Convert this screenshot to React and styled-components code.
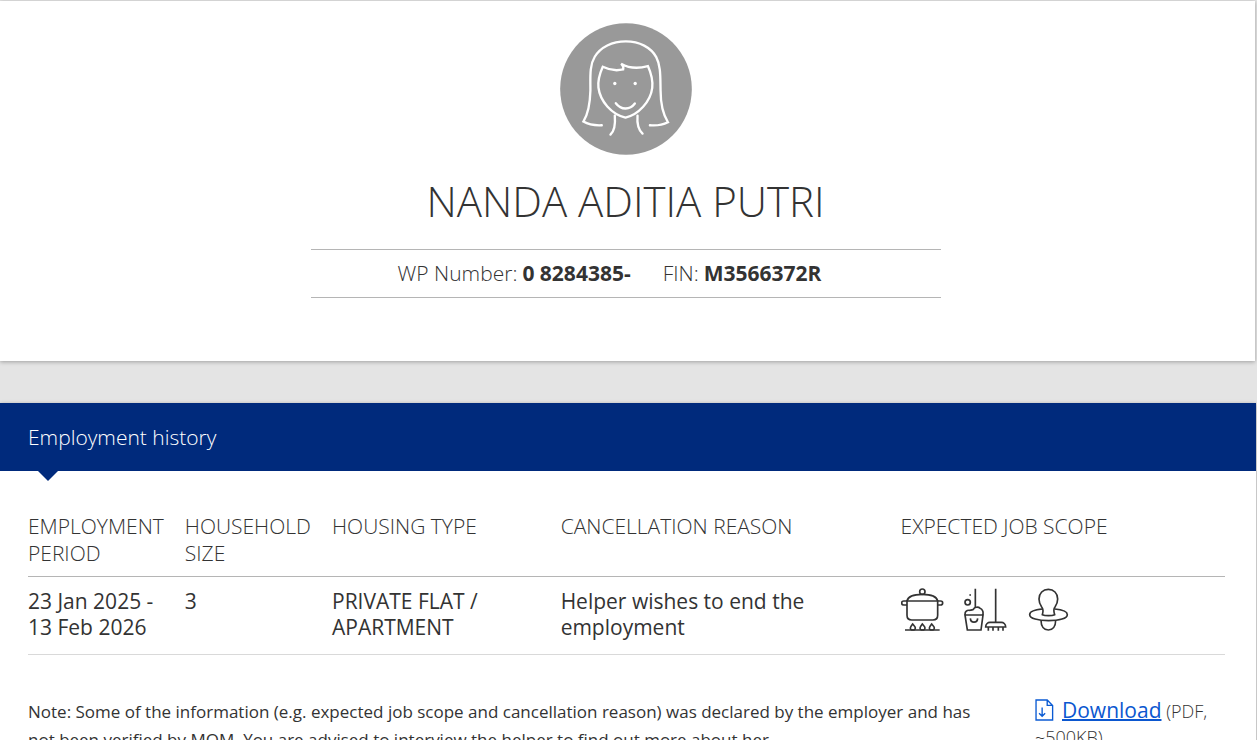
import React from "react";
import styled, { createGlobalStyle } from "styled-components";

const GlobalStyle = createGlobalStyle`
  *, *::before, *::after { box-sizing: border-box; }
  body {
    margin: 0;
    background: #e4e4e4;
    color: #333333;
    font-family: "Open Sans", "Noto Sans", sans-serif;
    font-size: 21px;
    line-height: 26px;
  }
`;

const Page = styled.main`
  display: flex;
  flex-direction: column;
  gap: 42px;
  padding: 1px 1px 0 0;
`;

const Panel = styled.section`
  background: #ffffff;
  box-shadow: 0 1px 4px rgba(0, 0, 0, 0.3);
`;

const Profile = styled(Panel)`
  display: flex;
  flex-direction: column;
  align-items: center;
  margin-right: 1px;
  padding: 22px 32px 63px 28px;
`;

const Avatar = styled.svg`
  width: 132px;
  height: 132px;
`;

const Name = styled.h1`
  margin: 17px 0 19px;
  font-size: 42px;
  font-weight: 300;
  line-height: 58px;
`;

const Identity = styled.dl`
  display: flex;
  justify-content: center;
  width: 100%;
  max-width: 630px;
  margin: 0;
  padding: 10px 0 11px;
  border: solid #b5b5b5;
  border-width: 1px 0;
`;

const IdentityItem = styled.div`
  display: flex;
  gap: 5px;
  padding-right: 32px;
`;

const Term = styled.dt`
  font-weight: 300;
`;

const Detail = styled.dd`
  margin: 0;
  font-weight: 700;
`;

const PanelTitle = styled.h2`
  position: relative;
  margin: 0;
  padding: 21px 28px;
  background: #002a7c;
  color: #ffffff;
  font-size: 21px;
  font-weight: 300;
  line-height: 26px;

  &::after {
    content: "";
    position: absolute;
    top: 100%;
    left: 38px;
    border: solid transparent;
    border-width: 10px 10px 0;
    border-top-color: #002a7c;
  }
`;

const PanelBody = styled.div`
  padding: 42px 31px 28px 28px;
`;

const HistoryTable = styled.table`
  width: 100%;
  border-collapse: separate;
  border-spacing: 0;
  table-layout: fixed;
`;

const Column = styled.col`
  width: ${({ $share }) => $share};
`;

const HeadCell = styled.th`
  padding: 0 16px 9px 0;
  border-bottom: 1px solid #b5b5b5;
  font-weight: 300;
  line-height: 27px;
  text-align: left;
  text-transform: uppercase;
  vertical-align: top;
  white-space: ${({ $nowrap }) => ($nowrap ? "nowrap" : "normal")};
`;

const Cell = styled.td`
  padding: 11px 20px 14px 0;
  border-bottom: 1px solid #d9d9d9;
  vertical-align: top;
`;

const ScopeList = styled.div`
  display: flex;
  gap: 20px;
`;

const ScopeIcon = styled.svg`
  display: block;
  width: 43px;
  height: 44px;
  fill: none;
  stroke: #333333;
  stroke-width: 5;
`;

const Footer = styled.footer`
  display: flex;
  justify-content: space-between;
  margin-top: 42px;
`;

const Note = styled.p`
  flex: 0 1 950px;
  margin: 0;
  padding-top: 1px;
  font-size: 17px;
  line-height: 28px;
`;

const Download = styled.p`
  flex: 0 0 190px;
  margin: 0;
  font-size: 18px;
  font-weight: 300;
`;

const DownloadIcon = styled.svg`
  width: 19px;
  height: 22px;
  margin-right: 8px;
  vertical-align: -3px;
  fill: none;
  stroke: #0b5bd3;
  stroke-width: 4;
`;

const DownloadLink = styled.a`
  color: #0b57d0;
  font-size: 21px;
  font-weight: 400;
  text-decoration-thickness: 2px;
`;

const PotIcon = () => (
  <ScopeIcon viewBox="32 37 129 132" role="img" aria-label="Cooking">
    <circle cx="96" cy="48" r="8" />
    <path d="M50 76C53 62 74 56 96 56s43 6 46 20" />
    <path d="M50 76h92v43q0 14-14 14H64q-14 0-14-14z" />
    <path d="M50 76H40q-6 0-6 6t6 6h10M142 76h9q6 0 6 6t-6 6h-9M44 163h104" />
    <path d="M67 145c-4 5-7 8-7 12q0 5 4 6h7q4-1 4-6c0-4-4-7-8-12zM96 145c-4 5-7 8-7 12q0 5 4 6h7q4-1 4-6c0-4-4-7-8-12zM124 145c-4 5-7 8-7 12q0 5 4 6h7q4-1 4-6c0-4-4-7-8-12z" />
  </ScopeIcon>
);

const CleaningIcon = () => (
  <ScopeIcon viewBox="221 37 129 132" role="img" aria-label="Cleaning">
    <circle cx="232" cy="80" r="8" />
    <path d="M237 58h5M255 39v56M316 39v100" />
    <path d="M224 118h54l-6 45h-41z" />
    <path d="M225 118c-3-8 4-16 14-14 5-2 8-1 10-3 3-8 16-8 20-3 8 3 11 12 8 20" />
    <path d="M240 128c1 15 21 15 22 0" />
    <path d="M286 154c0-9 7-14 13-14h34c6 0 13 5 13 14zM294 154v11M308 154v11M324 154v11M338 154v11" />
  </ScopeIcon>
);

const PacifierIcon = () => (
  <ScopeIcon viewBox="410 37 129 132" role="img" aria-label="Infant care">
    <path d="M456 117c3-9 3-17-2-23-5-7-8-14-8-24 0-17 12-29 28-29s28 12 28 29c0 10-3 17-8 24-5 6-4 14-1 23-8 4-29 4-37 0z" />
    <path d="M457 100c-23 2-39 8-39 17 0 11 25 18 57 18s56-7 56-18c0-9-15-15-38-17" />
    <path d="M452 134c0 18 9 29 22 29s22-11 22-29" />
  </ScopeIcon>
);

const HelperAvatar = () => (
  <Avatar viewBox="44 40 395 395" role="img" aria-label="Helper">
    <circle cx="241.500" cy="237.500" r="197" fill="#999999" />
    <g fill="none" stroke="#ffffff" strokeWidth="7" strokeLinecap="round" strokeLinejoin="miter">
      <path d="M169 346c-20 1-38-1-55-11 16-25 20-55 21-93 0-42-3-75 13-101 17-29 52-46 93-46s75 18 91 47c14 26 12 61 13 101 0 36 5 67 22 94-16 8-33 11-54 9" />
      <path d="M172 171c20 10 40 13 61 8 2-7-1-12-6-17 24 14 51 15 80 7 10 22 15 45 13 65-5 41-41 80-80 89-42-10-76-49-81-90-2-20 4-42 13-62z" />
      <path d="M208 317c2 24 1 44-13 57M276 317c-2 24 1 41 15 54M211 280c16 21 42 21 57 1" />
    </g>
    <g fill="#ffffff">
      <circle cx="208" cy="221" r="5" />
      <circle cx="269" cy="221" r="5" />
    </g>
  </Avatar>
);

export default function App() {
  return (
    <>
      <GlobalStyle />
      <Page>
        <Profile>
          <HelperAvatar />
          <Name>NANDA ADITIA PUTRI</Name>
          <Identity>
            <IdentityItem>
              <Term>WP Number:</Term>
              <Detail>0 8284385-</Detail>
            </IdentityItem>
            <IdentityItem>
              <Term>FIN:</Term>
              <Detail>M3566372R</Detail>
            </IdentityItem>
          </Identity>
        </Profile>
        <Panel>
          <PanelTitle>Employment history</PanelTitle>
          <PanelBody>
            <HistoryTable>
              <colgroup>
                <Column $share="13.1%" />
                <Column $share="12.3%" />
                <Column $share="19.1%" />
                <Column $share="28.4%" />
                <Column $share="27.1%" />
              </colgroup>
              <thead>
                <tr>
                  <HeadCell scope="col">Employment period</HeadCell>
                  <HeadCell scope="col">Household size</HeadCell>
                  <HeadCell scope="col" $nowrap>Housing type</HeadCell>
                  <HeadCell scope="col" $nowrap>Cancellation reason</HeadCell>
                  <HeadCell scope="col" $nowrap>Expected job scope</HeadCell>
                </tr>
              </thead>
              <tbody>
                <tr>
                  <Cell>23 Jan 2025 - 13 Feb 2026</Cell>
                  <Cell>3</Cell>
                  <Cell>PRIVATE FLAT / APARTMENT</Cell>
                  <Cell>Helper wishes to end the employment</Cell>
                  <Cell>
                    <ScopeList>
                      <PotIcon />
                      <CleaningIcon />
                      <PacifierIcon />
                    </ScopeList>
                  </Cell>
                </tr>
              </tbody>
            </HistoryTable>
            <Footer>
              <Note>
                Note: Some of the information (e.g. expected job scope and cancellation reason) was
                declared by the employer and has not been verified by MOM. You are advised to
                interview the helper to find out more about her.
              </Note>
              <Download>
                <DownloadIcon viewBox="46 43 56 65" aria-hidden="true">
                  <path d="M49 46h33l16 16v43H49zM82 46v16h16M67 68v25M58 85l9 9 9-9" />
                </DownloadIcon>
                <DownloadLink href="#download">Download</DownloadLink> (PDF, ~500KB)
              </Download>
            </Footer>
          </PanelBody>
        </Panel>
      </Page>
    </>
  );
}
